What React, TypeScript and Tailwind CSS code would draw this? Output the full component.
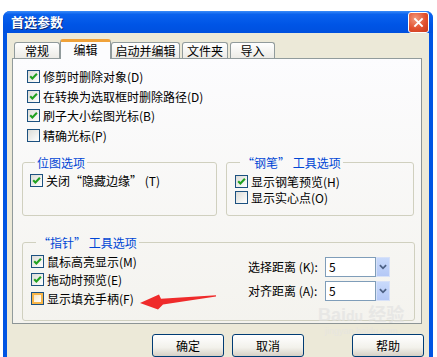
import type { FC, ReactNode } from 'react'

const Check: FC<{ checked?: boolean; hot?: boolean }> = ({ checked, hot }) => (
  <span className="w-[13px] h-[13px] shrink-0 border border-[#1C5180] bg-[linear-gradient(135deg,#DCDCD7,#FFFFFF)] flex">
    {hot ? (
      <span className="flex-1 border-2 border-[#F8B548] bg-[linear-gradient(135deg,#F6E6C4,#FFFFFF)]" />
    ) : checked ? (
      <svg viewBox="0 0 11 11" className="w-[11px] h-[11px]">
        <path d="M2.2 5.2 L4.4 7.5 L8.9 2.8" fill="none" stroke="#21A121" strokeWidth={2.1} />
      </svg>
    ) : null}
  </span>
)

const Row: FC<{ checked?: boolean; hot?: boolean; children: ReactNode }> = ({ checked, hot, children }) => (
  <div className="flex items-center h-[13px] gap-[3px] whitespace-nowrap">
    <Check checked={checked} hot={hot} />
    <span className="leading-[13px]">{children}</span>
  </div>
)

const Group: FC<{ title: string; className: string; children: ReactNode }> = ({ title, className, children }) => (
  <fieldset className={`border border-[#D0D0BF] rounded-[3px] ${className}`}>
    <legend className="ml-[5px] px-[2px] text-[#0046D5] leading-[14px]">{title}</legend>
    {children}
  </fieldset>
)

const Tab: FC<{ label: string; w: string; active?: boolean; extra?: string }> = ({ label, w, active, extra }) =>
  active ? (
    <div
      className={`${w} h-[20px] border-x border-[#919B9C] border-t-[3px] border-t-[#F0A23A] rounded-t-[3px] bg-[#FCFCFE] flex justify-center pt-[1px] leading-[14px] ${extra ?? ''}`}
    >
      {label}
    </div>
  ) : (
    <div
      className={`${w} h-[16px] mb-[1px] border-x border-t border-[#919B9C] rounded-t-[3px] bg-[linear-gradient(180deg,#FFFFFF,#ECEBE6)] flex items-center justify-center leading-[14px] ${extra ?? ''}`}
    >
      {label}
    </div>
  )

const Combo: FC<{ label: string }> = ({ label }) => (
  <div className="flex items-center h-[20px]">
    <span className="w-[77px] whitespace-nowrap">{label}</span>
    <div className="w-[51px] h-[20px] border border-[#7F9DB9] bg-white pl-[3px] flex items-center">5</div>
    <div className="w-[14px] h-[20px] border border-[#D7E1F8] bg-[linear-gradient(180deg,#C9DAFB,#B4C8F6)] flex items-center justify-center">
      <svg viewBox="0 0 9 6" className="w-[8px] h-[6px]">
        <path d="M1 1 L4.5 4.5 L8 1" fill="none" stroke="#4D6185" strokeWidth={2} />
      </svg>
    </div>
  </div>
)

const Button: FC<{ label: string; extra: string }> = ({ label, extra }) => (
  <button
    type="button"
    className={`w-[72px] h-[23px] border border-[#003C74] rounded-[3px] bg-[linear-gradient(180deg,#FFFFFF,#F2F1EB_60%,#D6D0C5)] ${extra}`}
  >
    {label}
  </button>
)

export default function App() {
  return (
    <div className="w-[437px] h-[357px] bg-white overflow-hidden relative font-['Noto_Sans_CJK_SC',sans-serif] text-[12px] text-black leading-[14px]">
      <div className="ml-[3px] mt-[11px] w-[430px] h-[346px] rounded-t-[7px] bg-[#0054E3] flex flex-col">
        {/* title bar */}
        <div className="h-[29px] rounded-t-[7px] bg-[linear-gradient(180deg,#3A8CF8_0%,#0A62EE_15%,#0055E6_60%,#0050DE_100%)] flex items-center justify-between pl-[8px] pr-[4px]">
          <span className="text-white font-bold text-[13px] [text-shadow:1px_1px_0_#0A2A7A]">首选参数</span>
          <div className="w-[21px] h-[21px] border border-white rounded-[3px] bg-[radial-gradient(circle_at_35%_30%,#F29B7E,#E2502E_55%,#C6371B)] flex items-center justify-center">
            <svg viewBox="0 0 12 12" className="w-[11px] h-[11px]">
              <path d="M1.5 1.5 L10.5 10.5 M10.5 1.5 L1.5 10.5" stroke="#FFFFFF" strokeWidth={2.2} />
            </svg>
          </div>
        </div>

        {/* body */}
        <div className="flex-1 mx-[4px] bg-[#ECE9D8] pl-[5px] pt-[6px]">
          <div className="flex items-end h-[20px] ml-[2px] -mb-[1px] relative z-10">
            <Tab label="常规" w="w-[46px]" />
            <Tab label="编辑" w="w-[51px]" active />
            <Tab label="启动并编辑" w="w-[69px]" />
            <Tab label="文件夹" w="w-[46px]" extra="ml-[2px]" />
            <Tab label="导入" w="w-[45px]" extra="ml-[2px]" />
          </div>

          <div className="w-[410px] h-[266px] border border-[#919B9C] border-r-[#8C9495] border-b-[#8C9495] bg-[linear-gradient(180deg,#FCFCFE,#F4F3EE)] pl-[9px] pt-[11px]">
            <div className="flex flex-col gap-[6.6px] pl-[5px]">
              <Row checked>修剪时删除对象(D)</Row>
              <Row checked>在转换为选取框时删除路径(D)</Row>
              <Row checked>刷子大小绘图光标(B)</Row>
              <Row>精确光标(P)</Row>
            </div>

            <div className="flex mt-[14px]">
              <Group title="位图选项" className="w-[195px] h-[60px] pl-[7px] pt-[4px]">
                <Row checked>关闭“隐藏边缘” (T)</Row>
              </Group>
              <Group title="“钢笔” 工具选项" className="w-[188px] h-[60px] ml-[9px] pl-[8px] pt-[5px]">
                <div className="flex flex-col gap-[3px]">
                  <Row checked>显示钢笔预览(H)</Row>
                  <Row>显示实心点(O)</Row>
                </div>
              </Group>
            </div>

            <Group title="“指针” 工具选项" className="w-[393px] h-[85px] mt-[20px] pl-[8px] pt-[5px]">
              <div className="flex">
                <div className="flex flex-col gap-[5.5px] w-[217px]">
                  <Row checked>鼠标高亮显示(M)</Row>
                  <Row checked>拖动时预览(E)</Row>
                  <Row hot>显示填充手柄(F)</Row>
                </div>
                <div className="flex flex-col gap-[4px] pt-[2px]">
                  <Combo label="选择距离 (K):" />
                  <Combo label="对齐距离 (A):" />
                </div>
              </div>
            </Group>
          </div>

          <div className="flex mt-[10px]">
            <Button label="确定" extra="ml-[140px]" />
            <Button label="取消" extra="ml-[8px]" />
            <Button label="帮助" extra="ml-[48px]" />
          </div>
        </div>
      </div>

      {/* red annotation arrow */}
      <svg className="absolute left-[138px] top-[291px] w-[80px] h-[20px]" viewBox="138 291 80 20">
        <path d="M140 303 L159 294.5 L161 298.8 L216 295.3 L216 296.6 L163 304.5 L158 309.5 Z" fill="#EF2B2B" />
      </svg>

      {/* baidu watermark */}
      <div className="absolute left-[318px] top-[304px] flex flex-col items-center opacity-60 pointer-events-none">
        <span className="text-[18px] font-bold text-[#E0E0E0] font-['Liberation_Sans',sans-serif] leading-[19px]">
          Bai<span className="text-[14px]">du</span> <span className="font-['Noto_Sans_CJK_SC',sans-serif]">经验</span>
        </span>
        <span className="text-[9px] text-[#E4E4E4] leading-[10px] font-['Liberation_Sans',sans-serif]">jingyan.baidu.com</span>
      </div>
    </div>
  )
}
